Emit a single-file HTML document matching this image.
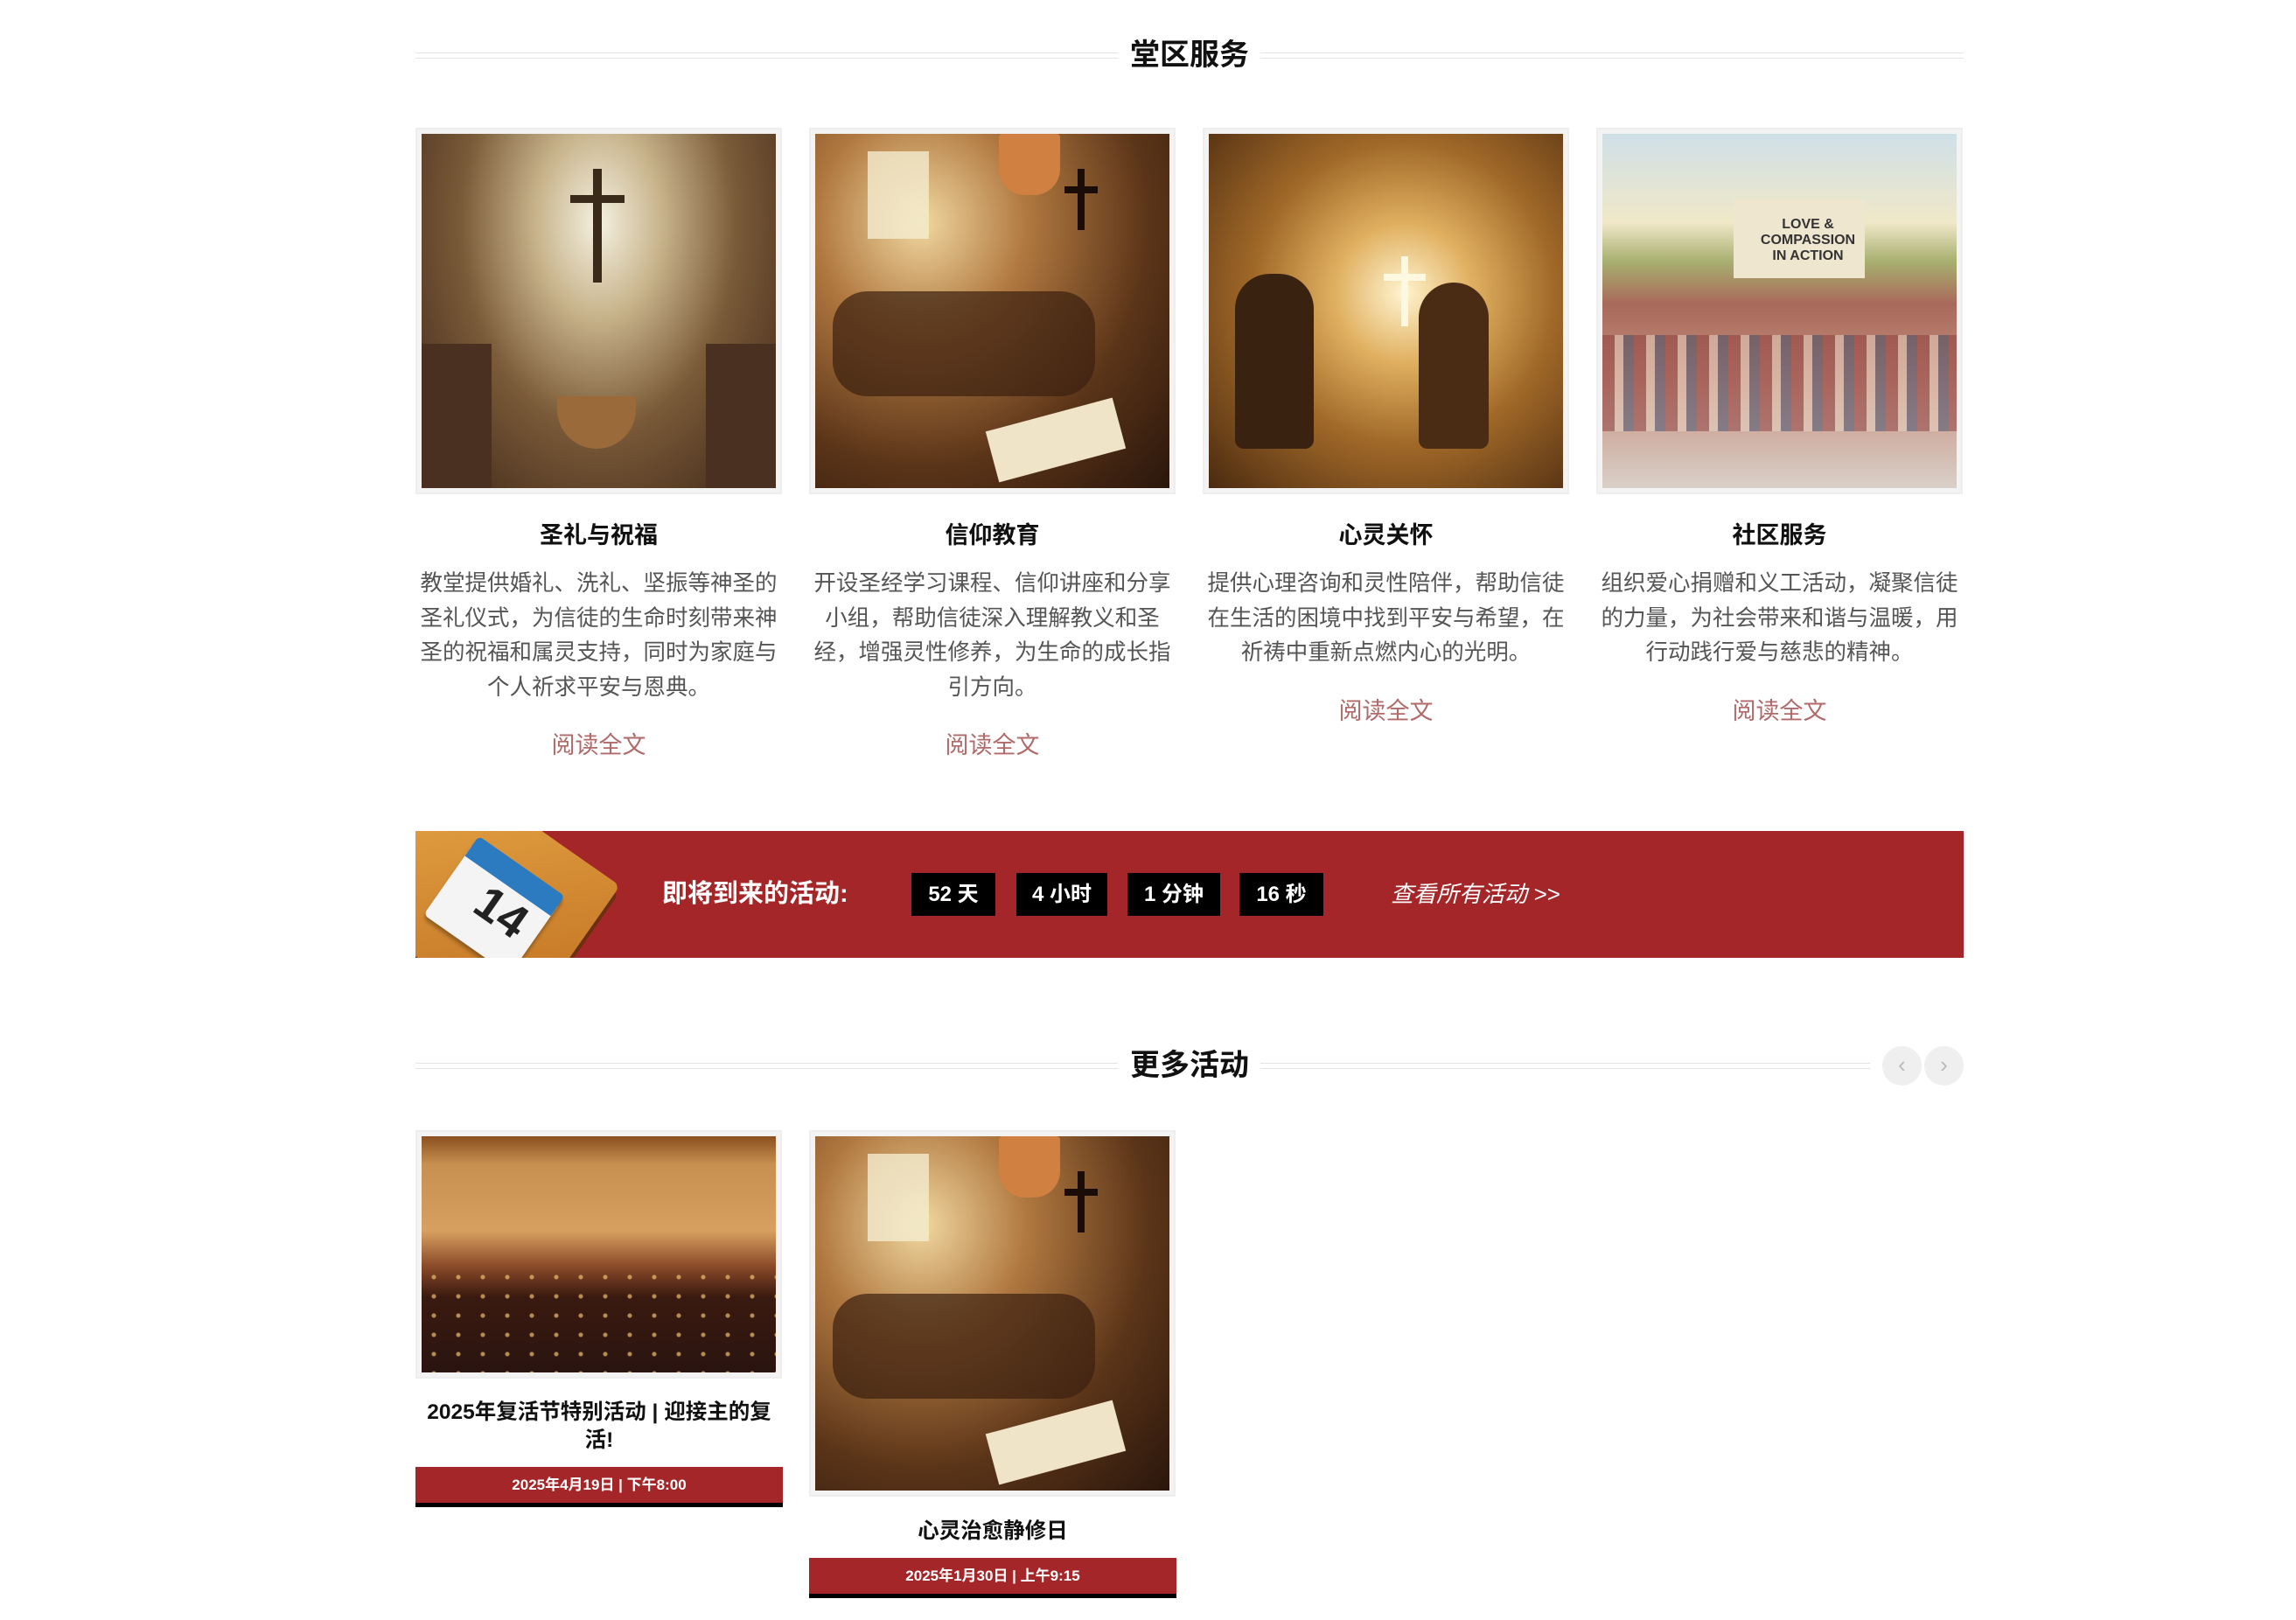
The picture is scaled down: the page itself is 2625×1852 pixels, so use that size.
<!DOCTYPE html>
<html><head><meta charset="utf-8">
<style>
*{margin:0;padding:0;box-sizing:border-box}
body{width:2625px;height:1852px;background:#fff;position:relative;overflow:hidden;font-family:"Liberation Sans","Noto Sans CJK SC",sans-serif;color:#222}
.abs{position:absolute}
.sect{position:absolute;left:475px;width:1770px;height:40px}
.sect .ln{position:absolute;top:17px;height:7px;border-top:1px solid #e3e3e3;border-bottom:1px solid #e3e3e3}
.sect h2{position:absolute;left:0;width:100%;text-align:center;font-size:34px;font-weight:bold;line-height:40px;color:#111}
.card{position:absolute;width:419px;border:2px solid #eee;padding:5px;background:#f3f3f3}
.card>div{width:100%;height:100%;position:relative;overflow:hidden}
.ct{position:absolute;width:419px;text-align:center;font-weight:bold;font-size:27px;color:#111}
.cd{position:absolute;width:421px;text-align:center;font-size:25.5px;line-height:39.5px;color:#555}
.rm{position:absolute;width:419px;text-align:center;font-size:27px;color:#b06a6a}
.box{position:absolute;top:998px;height:49px;background:#000;color:#fff;font-weight:bold;font-size:24px;line-height:49px;text-align:center}
.et{position:absolute;width:400px;text-align:center;font-weight:bold;font-size:24.5px;line-height:32px;color:#111}
.db{position:absolute;width:420px;height:46px;background:#a52628;border-bottom:5px solid #000;color:#fff;font-weight:bold;font-size:17px;line-height:41px;text-align:center}
</style></head><body>

<div class="sect" style="top:43px">
  <div class="ln" style="left:0;width:803px"></div>
  <div class="ln" style="left:966px;width:804px"></div>
  <h2>堂区服务</h2>
</div>

<!-- service cards -->
<div class="card" style="left:475px;top:146px;height:419px"><div style="background:radial-gradient(ellipse at 50% 25%,#f4f0e0 0%,#c8b48c 25%,#7a5a38 55%,#3a2416 100%)">
  <div class="abs" style="left:196px;top:40px;width:10px;height:130px;background:#3a2a1a"></div>
  <div class="abs" style="left:170px;top:70px;width:62px;height:9px;background:#3a2a1a"></div>
  <div class="abs" style="left:0;top:240px;width:80px;height:165px;background:#4a3020"></div>
  <div class="abs" style="right:0;top:240px;width:80px;height:165px;background:#4a3020"></div>
  <div class="abs" style="left:155px;top:300px;width:90px;height:60px;border-radius:0 0 45px 45px;background:#9a6a3a"></div>
</div></div>
<div class="card" style="left:925px;top:146px;height:419px"><div style="background:radial-gradient(ellipse at 30% 25%,#f0d8a0 0%,#b07840 30%,#5a3418 65%,#2a160c 100%)">
  <div class="abs" style="left:60px;top:20px;width:70px;height:100px;background:#f4ecd0;opacity:.8"></div>
  <div class="abs" style="left:210px;top:0;width:70px;height:70px;background:#d08040;border-radius:4px 4px 30px 30px"></div>
  <div class="abs" style="left:300px;top:40px;width:8px;height:70px;background:#1a0c06"></div>
  <div class="abs" style="left:285px;top:60px;width:38px;height:8px;background:#1a0c06"></div>
  <div class="abs" style="left:20px;top:180px;width:300px;height:120px;background:#3a2010;opacity:.7;border-radius:40px"></div>
  <div class="abs" style="left:200px;top:320px;width:150px;height:60px;background:#efe4c8;transform:rotate(-15deg)"></div>
</div></div>
<div class="card" style="left:1375px;top:146px;height:419px"><div style="background:radial-gradient(circle at 55% 45%,#fff4d0 0%,#e0b060 25%,#a06828 55%,#4a2a10 100%)">
  <div class="abs" style="left:220px;top:140px;width:8px;height:80px;background:#fff8e0"></div>
  <div class="abs" style="left:200px;top:160px;width:48px;height:8px;background:#fff8e0"></div>
  <div class="abs" style="left:30px;top:160px;width:90px;height:200px;background:#3a2210;border-radius:40px 40px 10px 10px"></div>
  <div class="abs" style="left:240px;top:170px;width:80px;height:190px;background:#4a2c14;border-radius:40px 40px 10px 10px"></div>
</div></div>
<div class="card" style="left:1825px;top:146px;height:419px"><div style="background:linear-gradient(180deg,#cfe0e8 0%,#f0e8c8 25%,#a8b070 36%,#a86a5a 48%,#c89080 70%,#d8d0c8 100%)">
  <div class="abs" style="left:150px;top:75px;width:150px;height:90px;background:#efe6d0"></div>
  <div class="abs" style="left:175px;top:95px;font-size:16px;font-weight:bold;color:#333;line-height:18px;text-align:center;width:120px">LOVE &amp; COMPASSION IN ACTION</div>
  <div class="abs" style="left:0;top:230px;width:100%;height:110px;background:repeating-linear-gradient(90deg,#8a3a3a 0 14px,#e8d8c8 14px 24px,#3a4a6a 24px 36px);opacity:.5"></div>
</div></div>

<div class="ct" style="left:475px;top:590px">圣礼与祝福</div>
<div class="ct" style="left:925px;top:590px">信仰教育</div>
<div class="ct" style="left:1375px;top:590px">心灵关怀</div>
<div class="ct" style="left:1825px;top:590px">社区服务</div>

<div class="cd" style="left:474px;top:648px">教堂提供婚礼、洗礼、坚振等神圣的圣礼仪式，为信徒的生命时刻带来神圣的祝福和属灵支持，同时为家庭与个人祈求平安与恩典。</div>
<div class="cd" style="left:924px;top:648px">开设圣经学习课程、信仰讲座和分享小组，帮助信徒深入理解教义和圣经，增强灵性修养，为生命的成长指引方向。</div>
<div class="cd" style="left:1374px;top:648px">提供心理咨询和灵性陪伴，帮助信徒在生活的困境中找到平安与希望，在祈祷中重新点燃内心的光明。</div>
<div class="cd" style="left:1824px;top:648px">组织爱心捐赠和义工活动，凝聚信徒的力量，为社会带来和谐与温暖，用行动践行爱与慈悲的精神。</div>

<div class="rm" style="left:475px;top:830px">阅读全文</div>
<div class="rm" style="left:925px;top:830px">阅读全文</div>
<div class="rm" style="left:1375px;top:791px">阅读全文</div>
<div class="rm" style="left:1825px;top:791px">阅读全文</div>

<!-- banner -->
<div class="abs" style="left:475px;top:950px;width:1770px;height:145px;background:#a52628;overflow:hidden">
  <div class="abs" style="left:-60px;top:-30px;width:260px;height:200px;background:linear-gradient(135deg,#e8a848,#c07020);transform:rotate(35deg);border-radius:8px;box-shadow:4px 8px 0 #6a3010"></div>
  <div class="abs" style="left:30px;top:30px;width:120px;height:110px;background:#f4f4f4;transform:rotate(35deg);border-radius:6px;border-top:28px solid #2c7ac0;box-shadow:2px 4px 4px rgba(0,0,0,.3)"></div>
  <div class="abs" style="left:68px;top:62px;font-size:54px;font-weight:bold;color:#222;transform:rotate(35deg)">14</div>
</div>
<div class="abs" style="left:757px;top:1002px;font-size:29px;font-weight:bold;color:#fff;line-height:40px">即将到来的活动:</div>
<div class="box" style="left:1042px;width:96px">52 天</div>
<div class="box" style="left:1162px;width:104px">4 小时</div>
<div class="box" style="left:1289px;width:106px">1 分钟</div>
<div class="box" style="left:1417px;width:96px">16 秒</div>
<div class="abs" style="left:1590px;top:1003px;font-size:26px;font-style:italic;color:#fff;line-height:38px">查看所有活动 &gt;&gt;</div>

<div class="sect" style="top:1198px">
  <div class="ln" style="left:0;width:803px"></div>
  <div class="ln" style="left:966px;width:697px"></div>
  <h2>更多活动</h2>
</div>
<div class="abs" style="left:2152px;top:1196px;width:45px;height:45px;border-radius:50%;background:#efefef;color:#bbb;font-size:26px;line-height:43px;text-align:center">&#8249;</div>
<div class="abs" style="left:2200px;top:1196px;width:45px;height:45px;border-radius:50%;background:#efefef;color:#bbb;font-size:26px;line-height:43px;text-align:center">&#8250;</div>

<!-- event cards -->
<div class="card" style="left:475px;top:1292px;height:284px"><div style="background:linear-gradient(180deg,#8a5020 0%,#c89050 12%,#d8a060 40%,#8a4a28 55%,#3a1a10 68%,#2a1410 100%)">
  <div class="abs" style="left:0;top:150px;width:100%;height:120px;background:radial-gradient(circle,#f0c070 0 2px,transparent 3px) 0 0/28px 22px;opacity:.7"></div>
</div></div>
<div class="et" style="left:485px;top:1599px">2025年复活节特别活动 | 迎接主的复活!</div>
<div class="db" style="left:475px;top:1677px">2025年4月19日 | 下午8:00</div>

<div class="card" style="left:925px;top:1292px;height:419px"><div style="background:radial-gradient(ellipse at 30% 25%,#f0d8a0 0%,#b07840 30%,#5a3418 65%,#2a160c 100%)">
  <div class="abs" style="left:60px;top:20px;width:70px;height:100px;background:#f4ecd0;opacity:.8"></div>
  <div class="abs" style="left:210px;top:0;width:70px;height:70px;background:#d08040;border-radius:4px 4px 30px 30px"></div>
  <div class="abs" style="left:300px;top:40px;width:8px;height:70px;background:#1a0c06"></div>
  <div class="abs" style="left:285px;top:60px;width:38px;height:8px;background:#1a0c06"></div>
  <div class="abs" style="left:20px;top:180px;width:300px;height:120px;background:#3a2010;opacity:.7;border-radius:40px"></div>
  <div class="abs" style="left:200px;top:320px;width:150px;height:60px;background:#efe4c8;transform:rotate(-15deg)"></div>
</div></div>
<div class="et" style="left:935px;top:1735px">心灵治愈静修日</div>
<div class="db" style="left:925px;top:1781px">2025年1月30日 | 上午9:15</div>

</body></html>
